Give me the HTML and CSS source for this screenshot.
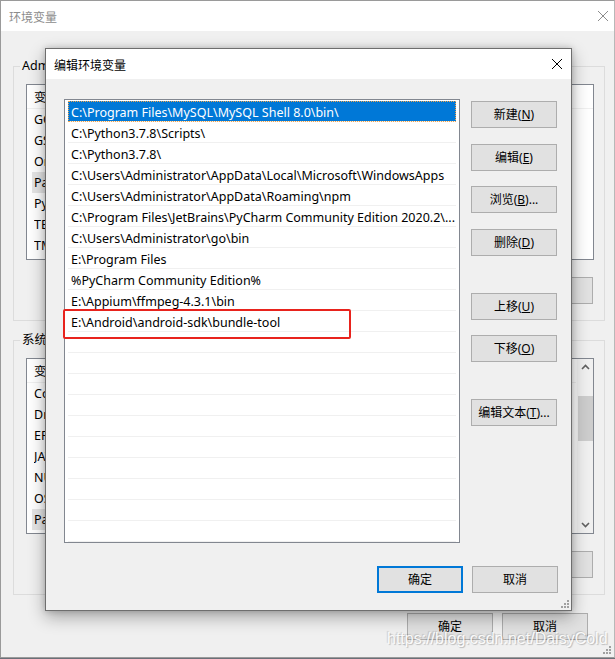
FILE: index.html
```html
<!DOCTYPE html>
<html lang="zh-CN">
<head>
<meta charset="utf-8">
<title>编辑环境变量</title>
<link rel="stylesheet" href="styles.css">
</head>
<body>
<div class="win">
  <div class="win-title">
    <span class="win-caption">环境变量</span>
    <svg class="win-close" width="12" height="12" viewBox="0 0 12 12"><path d="M1 1L11 11M11 1L1 11" stroke="#8c8c8c" stroke-width="1" fill="none"/></svg>
  </div>
  <div class="win-body">
    <fieldset class="group">
      <legend>Administrator 的用户变量(<u>U</u>)</legend>
      <div class="lv">
        <div class="lv-main">
          <div class="lv-head"><span class="c1">变量</span></div>
          <div class="lv-row"><span class="c1">GOPATH</span></div>
          <div class="lv-row"><span class="c1">GSTREAMER</span></div>
          <div class="lv-row"><span class="c1">OneDrive</span></div>
          <div class="lv-row lv-sel"><span class="c1">Path</span></div>
          <div class="lv-row"><span class="c1">PyCharm</span></div>
          <div class="lv-row"><span class="c1">TEMP</span></div>
          <div class="lv-row"><span class="c1">TMP</span></div>
        </div>
      </div>
      <div class="grp-btns">
        <button class="btn">新建(<u>N</u>)...</button>
        <button class="btn">编辑(<u>E</u>)...</button>
        <button class="btn">删除(<u>D</u>)</button>
      </div>
    </fieldset>
    <fieldset class="group group-sys">
      <legend>系统变量(<u>S</u>)</legend>
      <div class="lv">
        <div class="lv-main">
          <div class="lv-head"><span class="c1">变量</span></div>
          <div class="lv-row"><span class="c1">ComSpec</span></div>
          <div class="lv-row"><span class="c1">DriverData</span></div>
          <div class="lv-row"><span class="c1">ERLANG_HOME</span></div>
          <div class="lv-row"><span class="c1">JAVA_HOME</span></div>
          <div class="lv-row"><span class="c1">NUMBER_OF_PROCESSORS</span></div>
          <div class="lv-row"><span class="c1">OS</span></div>
          <div class="lv-row lv-sel"><span class="c1">Path</span></div>
        </div>
        <div class="vscroll">
          <svg class="sb-arrow" width="17" height="17" viewBox="0 0 17 17"><path d="M5 10L8.5 6.5L12 10" stroke="#606060" stroke-width="1.6" fill="none"/></svg>
          <div class="sb-track"><div class="sb-thumb"></div></div>
          <svg class="sb-arrow" width="17" height="17" viewBox="0 0 17 17"><path d="M5 7L8.5 10.5L12 7" stroke="#606060" stroke-width="1.6" fill="none"/></svg>
        </div>
      </div>
      <div class="grp-btns">
        <button class="btn">新建(<u>W</u>)...</button>
        <button class="btn">编辑(<u>I</u>)...</button>
        <button class="btn">删除(<u>L</u>)</button>
      </div>
    </fieldset>
    <div class="win-foot">
      <button class="btn">确定</button>
      <button class="btn">取消</button>
    </div>
  </div>
  <svg class="grip" width="8" height="8" viewBox="0 0 8 8"><g fill="#a0a0a0"><rect x="6" y="0" width="2" height="2"/><rect x="3" y="3" width="2" height="2"/><rect x="6" y="3" width="2" height="2"/><rect x="0" y="6" width="2" height="2"/><rect x="3" y="6" width="2" height="2"/><rect x="6" y="6" width="2" height="2"/></g></svg>
</div>

<div class="dlg">
  <div class="dlg-title">
    <span class="dlg-caption">编辑环境变量</span>
    <svg class="dlg-close" width="12" height="12" viewBox="0 0 12 12"><path d="M1 1L11 11M11 1L1 11" stroke="#000" stroke-width="1" fill="none"/></svg>
  </div>
  <div class="dlg-body">
    <div class="plist">
      <div class="prow psel"><span>C:\Program Files\MySQL\MySQL Shell 8.0\bin\</span></div>
      <div class="prow"><span>C:\Python3.7.8\Scripts\</span></div>
      <div class="prow"><span>C:\Python3.7.8\</span></div>
      <div class="prow"><span>C:\Users\Administrator\AppData\Local\Microsoft\WindowsApps</span></div>
      <div class="prow"><span>C:\Users\Administrator\AppData\Roaming\npm</span></div>
      <div class="prow"><span>C:\Program Files\JetBrains\PyCharm Community Edition 2020.2\...</span></div>
      <div class="prow"><span>C:\Users\Administrator\go\bin</span></div>
      <div class="prow"><span>E:\Program Files</span></div>
      <div class="prow"><span>%PyCharm Community Edition%</span></div>
      <div class="prow"><span>E:\Appium\ffmpeg-4.3.1\bin</span></div>
      <div class="prow"><span>E:\Android\android-sdk\bundle-tool</span></div>
      <div class="prow"></div>
      <div class="prow"></div>
      <div class="prow"></div>
      <div class="prow"></div>
      <div class="prow"></div>
      <div class="prow"></div>
      <div class="prow"></div>
      <div class="prow"></div>
      <div class="prow"></div>
      <div class="prow"></div>
    </div>
    <div class="dlg-btns">
      <button class="btn">新建(<u>N</u>)</button>
      <button class="btn gap43">编辑(<u>E</u>)</button>
      <button class="btn gap42">浏览(<u>B</u>)...</button>
      <button class="btn gap43">删除(<u>D</u>)</button>
      <button class="btn gap64">上移(<u>U</u>)</button>
      <button class="btn gap42">下移(<u>O</u>)</button>
      <button class="btn gap64">编辑文本(<u>T</u>)...</button>
    </div>
  </div>
  <div class="dlg-foot">
    <button class="btn btn-default">确定</button>
    <button class="btn">取消</button>
  </div>
  <svg class="grip" width="8" height="8" viewBox="0 0 8 8"><g fill="#a0a0a0"><rect x="6" y="0" width="2" height="2"/><rect x="3" y="3" width="2" height="2"/><rect x="6" y="3" width="2" height="2"/><rect x="0" y="6" width="2" height="2"/><rect x="3" y="6" width="2" height="2"/><rect x="6" y="6" width="2" height="2"/></g></svg>
</div>

<div class="annot"></div>
<div class="watermark">https://blog.csdn.net/DaisyCold</div>
</body>
</html>
```

FILE: styles.css
```css
* { box-sizing: border-box; }
html, body { margin: 0; padding: 0; }
body {
  width: 615px;
  height: 659px;
  overflow: hidden;
  position: relative;
  background: #6b6f78;
  font-family: "Noto Sans", "Noto Sans CJK SC", sans-serif;
  font-size: 12px;
  color: #000;
}
u { text-decoration: underline; text-underline-offset: 1px; }

.btn {
  width: 86px;
  height: 27px;
  padding: 0;
  margin: 0;
  background: #e1e1e1;
  border: 1px solid #adadad;
  font-family: "Noto Sans", "Noto Sans CJK SC", sans-serif;
  font-size: 12px;
  color: #000;
  line-height: 25px;
  text-align: center;
  white-space: nowrap;
}

/* background window */
.win {
  width: 615px;
  height: 658px;
  background: #f0f0f0;
  border: 1px solid #9a9a9a;
  border-right-color: #b8b8b8;
  display: flex;
  flex-direction: column;
  position: relative;
}
.win-title {
  height: 30px;
  background: #fff;
  display: flex;
  align-items: center;
  justify-content: space-between;
  padding: 0 5px 0 8px;
  flex: none;
}
.win-caption { color: #8c8c8c; font-family: "Noto Sans CJK SC", sans-serif; }
.win-body { display: flex; flex-direction: column; }

.group {
  width: 592px;
  margin: 27px 0 0 12px;
  padding: 10px 10px 16px 12px;
  border: 1px solid #dcdcdc;
  min-width: 0;
}
.group legend {
  padding: 0 2px;
  margin-left: -6px;
  line-height: 16px;
  height: 16px;
  font-size: 12.5px;
}
.group-sys { margin-top: 11px; }

.lv {
  width: 568px;
  height: 176px;
  border: 1px solid #828790;
  background: #fff;
  display: flex;
  overflow: hidden;
  font-size: 12.5px;
}
.lv-main { flex: 1; min-width: 0; }
.lv-head {
  height: 24px;
  display: flex;
  align-items: center;
  padding-left: 7px;
  border-bottom: 1px solid #f0f0f0;
}
.lv-row {
  height: 21px;
  display: flex;
  align-items: center;
  padding-left: 7px;
  white-space: nowrap;
}
.lv-sel { background: #e5e5e5; margin-left: 5px; padding-left: 2px; width: 480px; }
.c1 { width: 200px; flex: none; overflow: hidden; }

.vscroll {
  width: 17px;
  flex: none;
  background: #f0f0f0;
  display: flex;
  flex-direction: column;
  border-left: 1px solid #f8f8f8;
}
.sb-arrow { display: block; flex: none; }
.sb-track { flex: 1; padding-top: 20px; display: flex; justify-content: center; }
.sb-thumb { width: 15px; height: 45px; background: #cdcdcd; }

.grp-btns {
  margin-top: 17px;
  display: flex;
  justify-content: flex-end;
  gap: 9px;
  padding-right: 1px;
}
.win-foot {
  margin: 18px 26px 0 0;
  display: flex;
  justify-content: flex-end;
  gap: 9px;
}
.win > .grip { position: absolute; right: 3px; bottom: 3px; }

/* edit dialog */
.dlg {
  position: absolute;
  left: 45px;
  top: 48px;
  width: 527px;
  background: #f0f0f0;
  border: 1px solid #6e6e6e;
  box-shadow: 0 6px 16px rgba(0,0,0,0.32), 0 0 6px rgba(0,0,0,0.18);
  display: flex;
  flex-direction: column;
  padding-bottom: 17px;
}
.dlg-title {
  height: 30px;
  background: #fff;
  display: flex;
  align-items: center;
  justify-content: space-between;
  padding: 0 8px 0 8px;
}
.dlg-caption { font-family: "Noto Sans CJK SC", sans-serif; }
.dlg-body {
  display: flex;
  padding: 20px 13px 0 18px;
}
.plist {
  width: 396px;
  height: 444px;
  border: 1px solid #828790;
  background: #fff;
  padding: 1px 3px;
  overflow: hidden;
  font-size: 12.5px;
}
.prow {
  height: 21px;
  display: flex;
  align-items: center;
  padding: 2px 0 0 3px;
  border-bottom: 1px solid #f0f0f0;
  white-space: nowrap;
  overflow: hidden;
}
.psel {
  background: #0078d7;
  color: #fff;
  outline: 1px dotted #f3a54c;
  outline-offset: -1px;
}
.dlg-btns {
  margin: 2px 0 0 11px;
  width: 86px;
  display: flex;
  flex-direction: column;
}
.gap42 { margin-top: 15px; }
.gap43 { margin-top: 16px; }
.gap64 { margin-top: 37px; }
.dlg-foot {
  margin: 23px 13px 0 0;
  display: flex;
  justify-content: flex-end;
  gap: 9px;
}
.btn-default { border: 2px solid #0078d7; line-height: 23px; }
.dlg > .grip { position: absolute; right: 2px; bottom: 2px; }

/* annotation + watermark overlays */
.annot {
  position: absolute;
  left: 63px;
  top: 309px;
  width: 288px;
  height: 30px;
  border: 2px solid #e8231d;
  border-radius: 2px;
}
.watermark {
  position: absolute;
  left: 387px;
  top: 630px;
  font-family: "Liberation Sans", Arial, sans-serif;
  font-size: 16px;
  color: rgba(255,255,255,0.92);
  text-shadow: 1px 1px 1px rgba(0,0,0,0.22), -1px -1px 1px rgba(0,0,0,0.14);
  white-space: nowrap;
}
```
